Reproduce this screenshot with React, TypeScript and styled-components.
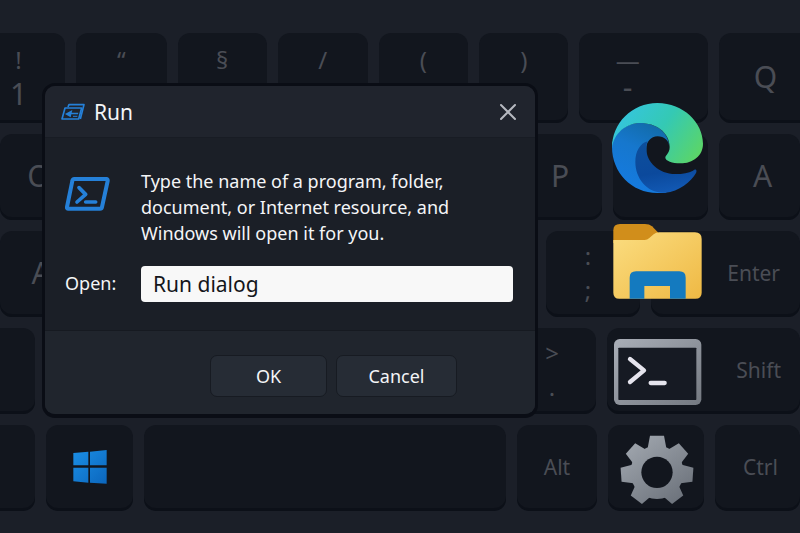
import React from "react";
import styled, { createGlobalStyle } from "styled-components";

const GlobalStyle = createGlobalStyle`
  *, *::before, *::after { box-sizing: border-box; }
  body {
    margin: 0;
    background: #1b1f28;
    font-family: "Noto Sans", "Open Sans", sans-serif;
  }
  button, input { font-family: inherit; }
`;

const Desktop = styled.main`
  position: relative;
  min-height: 100vh;
  padding: 33px 0 22px;
  overflow: hidden;
  background: #1b1f28;
`;

const Keyboard = styled.div`
  display: grid;
  grid-template-rows: 90px repeat(4, 86px);
  gap: 11px;
`;

const KeyRow = styled.div<{ $keys: number[] }>`
  display: grid;
  grid-template-columns: ${(p) => p.$keys.map((k) => `minmax(0, ${k}fr)`).join(" ")};
  gap: 11px;
`;

type Align = "start" | "center" | "end";

const Key = styled.kbd<{ $align?: Align; $edge?: "left" | "right"; $padStart?: number; $padEnd?: number }>`
  display: flex;
  flex-direction: column;
  justify-content: center;
  align-items: ${(p) => (p.$align === "end" ? "flex-end" : p.$align === "start" ? "flex-start" : "center")};
  padding: 0 ${(p) => p.$padEnd ?? 0}px 3px ${(p) => p.$padStart ?? 0}px;
  border-radius: ${(p) => (p.$edge === "left" ? "0 12px 12px 0" : p.$edge === "right" ? "12px 0 0 12px" : "12px")};
  background: #12161e;
  box-shadow: inset 0 -3px 0 #0c1018;
  color: #4a4d55;
  font-family: inherit;
`;

const Letter = styled.span`
  font-size: 30px;
  line-height: 40px;
`;

const Word = styled.span`
  font-size: 21px;
  line-height: 28px;
`;

const Legend = styled.span<{ $large?: boolean; $raised?: boolean }>`
  height: 34px;
  font-size: ${(p) => (p.$large ? 30 : 24)}px;
  line-height: ${(p) => (p.$raised ? 20 : 34)}px;
`;

const LegendPair = styled.span`
  display: flex;
  flex-direction: column;
  align-items: center;
`;

const AppColumn = styled.nav`
  position: absolute;
  top: 103px;
  right: 97px;
  display: flex;
  flex-direction: column;
  gap: 30px;
`;

const AppButton = styled.button`
  display: flex;
  padding: 0;
  border: 0;
  background: none;
  cursor: pointer;
`;

const Dialog = styled.form`
  position: absolute;
  top: 83px;
  left: 42px;
  width: 62%;
  border: 3px solid #0a0d15;
  border-bottom-width: 4px;
  border-radius: 13px;
  overflow: hidden;
  background: #1b1f27;
  color: #f4f5f7;
`;

const TitleBar = styled.header`
  display: flex;
  align-items: center;
  gap: 9px;
  height: 52px;
  padding: 1px 18px 0 16px;
  border-bottom: 1px solid #181c24;
  background: #20242d;
`;

const Title = styled.h1`
  flex: 1;
  margin: 0;
  font-size: 21px;
  font-weight: 400;
  line-height: 28px;
`;

const CloseButton = styled.button`
  display: flex;
  padding: 0;
  border: 0;
  background: none;
  cursor: pointer;
`;

const Body = styled.div`
  display: grid;
  grid-template-columns: 76px 1fr;
  row-gap: 20px;
  padding: 30px 22px 28px 20px;
`;

const IconCell = styled.div`
  padding-top: 9px;
`;

const Message = styled.p`
  margin: 0;
  font-size: 18px;
  line-height: 26px;
`;

const FieldLabel = styled.label`
  font-size: 18px;
  line-height: 34px;
`;

const Field = styled.input`
  width: 100%;
  height: 36px;
  padding: 0 12px;
  border: 0;
  border-radius: 4px;
  background: #f8f8f8;
  color: #14161b;
  font-size: 21px;
  outline: none;
`;

const Footer = styled.footer`
  display: flex;
  justify-content: flex-end;
  gap: 9px;
  padding: 24px 78px 17px;
  border-top: 1px solid #161a21;
  background: #20252d;
`;

const ActionButton = styled.button`
  width: 117px;
  height: 42px;
  padding: 0;
  border: 1px solid #171b22;
  border-radius: 7px;
  background: #262c35;
  color: #f4f5f7;
  font-size: 18px;
  cursor: pointer;
`;

const WideActionButton = styled(ActionButton)`
  width: 121px;
`;

const RunTitleIcon = () => (
  <svg width="24" height="18" viewBox="0 0 72 54" fill="none" aria-hidden="true">
    <path d="M21 12 24 5H69L58 48" stroke="#2580d8" strokeWidth="5" strokeLinejoin="round" />
    <path d="M12 15H62L53 48H3Z" stroke="#2580d8" strokeWidth="5" strokeLinejoin="round" />
    <path d="M12 33 34 21 32 29H52L51 34H31L29 43Z" fill="#2580d8" />
    <path d="M36 40H49" stroke="#2580d8" strokeWidth="3" />
  </svg>
);

const PromptIcon = () => (
  <svg width="45" height="34" viewBox="0 0 135 102" fill="none" aria-hidden="true">
    <path
      d="M28 6H124Q129 6 128 12L111 90Q110 95 105 95H10Q5 95 6 90L22 12Q23 6 28 6Z"
      stroke="#2580d8"
      strokeWidth="12"
    />
    <path d="M42 32 62 52 36 75M62 75H92" stroke="#2580d8" strokeWidth="11" strokeLinecap="round" strokeLinejoin="round" />
  </svg>
);

const CloseIcon = () => (
  <svg width="18" height="18" viewBox="0 0 18 18" fill="none" aria-hidden="true">
    <path d="M2 2 16 16M16 2 2 16" stroke="#b6b9c0" strokeWidth="2" strokeLinecap="round" />
  </svg>
);

const WindowsIcon = () => (
  <svg width="34" height="34" viewBox="0 0 102 102" aria-hidden="true">
    <defs>
      <linearGradient id="win" x1="0" y1="0" x2="1" y2="1">
        <stop offset="0" stopColor="#1b8fe6" />
        <stop offset="1" stopColor="#0b66bd" />
      </linearGradient>
    </defs>
    <path d="M1 9 46 5V46H1ZM51 5 101 0V46H51ZM1 53H46V98L1 94ZM51 53H101V101L51 98Z" fill="url(#win)" />
  </svg>
);

const EdgeIcon = () => (
  <svg width="91" height="90" viewBox="0 0 273 270" aria-hidden="true">
    <defs>
      <linearGradient id="edgeGreen" x1="0" y1="0.3" x2="1" y2="0.75">
        <stop offset="0" stopColor="#35c5e0" />
        <stop offset="0.5" stopColor="#34c9b4" />
        <stop offset="1" stopColor="#5bd568" />
      </linearGradient>
      <linearGradient id="edgeBlue" x1="0.7" y1="0" x2="0.3" y2="1">
        <stop offset="0" stopColor="#126ba8" />
        <stop offset="0.4" stopColor="#1677cd" />
        <stop offset="1" stopColor="#157be2" />
      </linearGradient>
      <linearGradient id="edgeDark" x1="0.3" y1="0" x2="0.5" y2="1">
        <stop offset="0" stopColor="#0d4f9c" />
        <stop offset="0.6" stopColor="#0b499c" />
        <stop offset="1" stopColor="#1259b4" />
      </linearGradient>
    </defs>
    <path
      d="M0 132C0 92 42 60 85 60C132 60 172 88 172 134C172 112 156 100 137 100C116 100 103 117 103 137L100 240L165 269C155 270 146 270 136 270C58 270 0 208 0 132Z"
      fill="url(#edgeBlue)"
    />
    <path
      d="M107 115C84 121 70 146 70 177C70 228 108 273 160 269C200 266 238 236 252 210C256 201 251 196 243 203C230 210 213 213 190 213C140 213 103 176 103 137C103 128 104 120 107 115Z"
      fill="url(#edgeDark)"
    />
    <path
      d="M0 135C0 60 60 0 136 0C215 0 273 60 273 122C273 158 243 181 205 181C181 181 160 173 160 164C160 156 173 152 173 132C172 86 130 60 85 60C42 60 5 92 0 135Z"
      fill="url(#edgeGreen)"
    />
  </svg>
);

const FolderIcon = () => (
  <svg width="91" height="80" viewBox="0 0 273 240" aria-hidden="true">
    <defs>
      <linearGradient id="folder" x1="0" y1="0" x2="1" y2="1">
        <stop offset="0" stopColor="#fbdd80" />
        <stop offset="1" stopColor="#efb944" />
      </linearGradient>
    </defs>
    <path d="M4 22Q4 3 24 3H99Q112 3 120 10L142 32L115 60H4Z" fill="#d18e1b" />
    <path d="M4 51H98Q106 51 112 45L125 34Q132 28 142 28H249Q269 28 269 48V209Q269 227 250 227H22Q4 227 4 209Z" fill="url(#folder)" />
    <path d="M53 227V164Q53 145 72 145H202Q221 145 221 164V227H174V189H97V227Z" fill="#147abf" />
  </svg>
);

const TerminalIcon = () => (
  <svg width="91" height="72" viewBox="0 0 273 216" fill="none" aria-hidden="true">
    <defs>
      <linearGradient id="frame" x1="0" y1="0" x2="1" y2="1">
        <stop offset="0" stopColor="#a9aeb7" />
        <stop offset="1" stopColor="#747981" />
      </linearGradient>
    </defs>
    <rect x="6" y="18" width="262" height="198" rx="17" fill="url(#frame)" />
    <rect x="19" y="44" width="234" height="157" rx="2" fill="#161a23" />
    <path d="M54 78 96 112 54 147M116 150H158" stroke="#e5e4ed" strokeWidth="13" strokeLinecap="round" strokeLinejoin="round" />
  </svg>
);

const teeth = [
  { angle: 0, top: 2 },
  { angle: 48, top: 5 },
  { angle: 94, top: 4 },
  { angle: 143, top: 9 },
  { angle: -48, top: 5 },
  { angle: -94, top: 4 },
  { angle: -143, top: 9 },
];

const GearIcon = () => (
  <svg width="91" height="72" viewBox="0 0 273 216" aria-hidden="true">
    <defs>
      <linearGradient id="gear" gradientUnits="userSpaceOnUse" x1="60" y1="10" x2="210" y2="210">
        <stop offset="0" stopColor="#a0a6ae" />
        <stop offset="1" stopColor="#6a7079" />
      </linearGradient>
      <mask id="gearShape">
        <g fill="#fff">
          <circle cx="135" cy="112" r="80" />
          {teeth.map(({ angle, top }) => (
            <path key={angle} d={`M106 45 114 ${top}H156L164 45Z`} transform={`rotate(${angle} 135 112)`} />
          ))}
        </g>
        <circle cx="135" cy="112" r="47" fill="#000" />
      </mask>
    </defs>
    <rect width="273" height="216" fill="url(#gear)" mask="url(#gearShape)" />
  </svg>
);

export default function App() {
  return (
    <>
      <GlobalStyle />
      <Desktop>
        <Keyboard>
          <KeyRow $keys={[65, 91, 89, 90, 90, 89, 129, 81]}>
            <Key $edge="left" $align="start" $padStart={10}>
              <LegendPair>
                <Legend>!</Legend>
                <Legend $large>1</Legend>
              </LegendPair>
            </Key>
            {["“", "§", "/", "(", ")"].map((symbol) => (
              <Key key={symbol}>
                <Legend>{symbol}</Legend>
                <Legend />
              </Key>
            ))}
            <Key $padEnd={32}>
              <Legend>—</Legend>
              <Legend $large $raised>
                -
              </Legend>
            </Key>
            <Key $edge="right" $padStart={12}>
              <Letter>Q</Letter>
            </Key>
          </KeyRow>
          <KeyRow $keys={[78, 418, 84, 95, 81]}>
            <Key>
              <Letter>O</Letter>
            </Key>
            <Key />
            <Key>
              <Letter>P</Letter>
            </Key>
            <Key />
            <Key $padStart={6}>
              <Letter>A</Letter>
            </Key>
          </KeyRow>
          <KeyRow $keys={[82, 442, 94, 149]}>
            <Key>
              <Letter>A</Letter>
            </Key>
            <Key />
            <Key $padEnd={10}>
              <Legend>:</Legend>
              <Legend>;</Legend>
            </Key>
            <Key $align="end" $padEnd={20}>
              <Word>Enter</Word>
            </Key>
          </KeyRow>
          <KeyRow $keys={[35, 451, 88, 193]}>
            <Key $edge="left" />
            <Key />
            <Key>
              <Legend>&gt;</Legend>
              <Legend>.</Legend>
            </Key>
            <Key $align="end" $padEnd={19}>
              <Word>Shift</Word>
            </Key>
          </KeyRow>
          <KeyRow $keys={[35, 87, 362, 80, 96, 85]}>
            <Key $edge="left" />
            <Key>
              <WindowsIcon />
            </Key>
            <Key />
            <Key>
              <Word>Alt</Word>
            </Key>
            <Key />
            <Key $padStart={6}>
              <Word>Ctrl</Word>
            </Key>
          </KeyRow>
        </Keyboard>

        <AppColumn aria-label="Apps">
          <AppButton type="button" aria-label="Edge">
            <EdgeIcon />
          </AppButton>
          <AppButton type="button" aria-label="File Explorer">
            <FolderIcon />
          </AppButton>
          <AppButton type="button" aria-label="Terminal">
            <TerminalIcon />
          </AppButton>
          <AppButton type="button" aria-label="Settings">
            <GearIcon />
          </AppButton>
        </AppColumn>

        <Dialog role="dialog" aria-labelledby="run-title" onSubmit={(e) => e.preventDefault()}>
          <TitleBar>
            <RunTitleIcon />
            <Title id="run-title">Run</Title>
            <CloseButton type="button" aria-label="Close">
              <CloseIcon />
            </CloseButton>
          </TitleBar>
          <Body>
            <IconCell>
              <PromptIcon />
            </IconCell>
            <Message>
              Type the name of a program, folder,
              <br />
              document, or Internet resource, and
              <br />
              Windows will open it for you.
            </Message>
            <FieldLabel htmlFor="run-open">Open:</FieldLabel>
            <Field id="run-open" type="text" defaultValue="Run dialog" />
          </Body>
          <Footer>
            <ActionButton type="submit">OK</ActionButton>
            <WideActionButton type="button">Cancel</WideActionButton>
          </Footer>
        </Dialog>
      </Desktop>
    </>
  );
}
